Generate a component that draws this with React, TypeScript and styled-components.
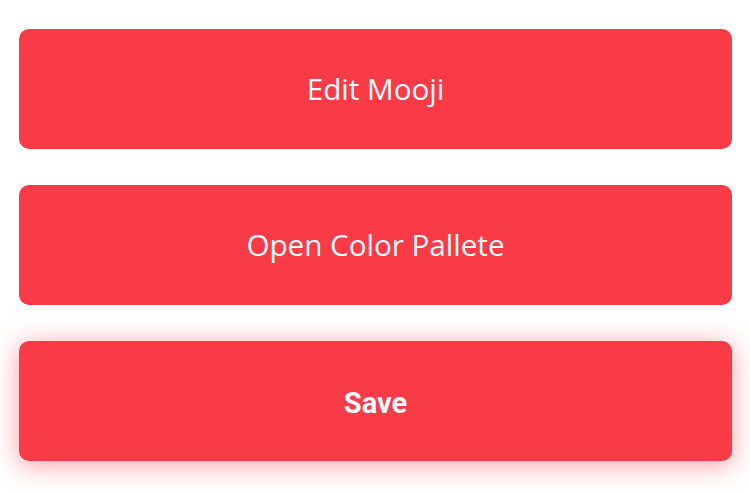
import React from "react";
import styled, { createGlobalStyle } from "styled-components";

const Global = createGlobalStyle`
  html, body { margin: 0; padding: 0; background: #ffffff; }
  body { font-family: "Open Sans", sans-serif; min-height: 494px; }
`;

const Page = styled.div`
  display: flex;
  flex-direction: column;
  gap: 36px;
  padding: 29px 18px 33px 19px;
  min-height: 494px;
  box-sizing: border-box;
`;

const Button = styled.button<{ $primary?: boolean }>`
  display: flex;
  align-items: center;
  justify-content: center;
  flex-shrink: 0;
  height: 120px;
  width: 100%;
  border: none;
  border-radius: 10px;
  background: #f93a47;
  color: #ffffff;
  font-family: ${(p) => (p.$primary ? `Roboto, "Liberation Sans", sans-serif` : `"Open Sans", sans-serif`)};
  font-weight: ${(p) => (p.$primary ? 700 : 400)};
  font-size: ${(p) => (p.$primary ? "29px" : "29.6px")};
  padding: ${(p) => (p.$primary ? "3px 0 0" : "0 0 2px")};
  box-shadow: ${(p) => (p.$primary ? "0 4px 26px rgba(249, 58, 71, 0.5)" : "none")};
  cursor: pointer;
`;

export default function App() {
  return (
    <>
      <Global />
      <Page>
        <Button>Edit Mooji</Button>
        <Button>Open Color Pallete</Button>
        <Button $primary>Save</Button>
      </Page>
    </>
  );
}
